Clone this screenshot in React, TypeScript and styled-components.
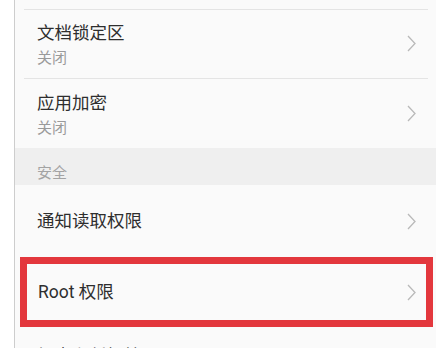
import React from "react";
import styled, { createGlobalStyle } from "styled-components";

const Global = createGlobalStyle`
  html, body { margin: 0; padding: 0; background: #ffffff; }
  body { font-family: Roboto, "Noto Sans CJK SC", sans-serif; overflow: hidden; }
`;

const Page = styled.div`
  display: flex;
  width: 436px;
  height: 348px;
  overflow: hidden;
`;

const Gutter = styled.div`
  width: 14px;
  flex: none;
  background: #ffffff;
  border-right: 1px solid #cdcdcd;
`;

const Content = styled.div`
  flex: 1;
  display: flex;
  flex-direction: column;
  background: #fafafa;
`;

const Stub = styled.div`
  height: 9px;
  flex: none;
`;

const Divider = styled.div`
  height: 1px;
  flex: none;
  margin: 0 8px 0 9px;
  background: #e4e4e4;
`;

const Row = styled.div<{ $h: number; $padTop?: number; $inset?: boolean }>`
  display: flex;
  justify-content: space-between;
  flex: none;
  box-sizing: border-box;
  height: ${(p) => p.$h}px;
  padding: ${(p) => (p.$padTop != null ? `${p.$padTop}px` : "0")}
    ${(p) => (p.$inset ? "10px" : "20px")} 0
    ${(p) => (p.$inset ? "11px" : "22px")};
  align-items: ${(p) => (p.$padTop != null ? "flex-start" : "center")};
`;

const Texts = styled.div<{ $gap?: number }>`
  display: flex;
  flex-direction: column;
  gap: ${(p) => p.$gap ?? 5}px;
`;

const Title = styled.div`
  font-family: Roboto, "Noto Sans CJK SC", sans-serif;
  font-size: 17.5px;
  line-height: 22px;
  color: #2e2e2e;
  white-space: nowrap;
`;

const Sub = styled.div`
  font-family: "Noto Sans CJK SC", sans-serif;
  font-size: 15px;
  line-height: 18px;
  color: #9a9a9a;
`;

const Section = styled.div`
  height: 37px;
  flex: none;
  box-sizing: border-box;
  background: #efefef;
  padding: 15px 0 0 22px;
  font-family: "Noto Sans CJK SC", sans-serif;
  font-size: 15px;
  line-height: 18px;
  color: #a3a3a3;
`;

const Highlight = styled.div`
  flex: none;
  margin: 0 3px 0 5px;
  border: 7px solid #e3373d;
`;

const ChevronBox = styled.div<{ $top?: number }>`
  display: flex;
  flex: none;
  margin-top: ${(p) => p.$top ?? 0}px;
`;

const Chevron = ({ top }: { top?: number }) => (
  <ChevronBox $top={top}>
    <svg width="9" height="17" viewBox="0 0 9 17">
      <path d="M1 1 L8 8.5 L1 16" fill="none" stroke="#b9b9b9" strokeWidth="1.3" />
    </svg>
  </ChevronBox>
);

export default function App() {
  return (
    <>
      <Global />
      <Page>
        <Gutter />
        <Content>
          <Stub />
          <Divider />
          <Row $h={68} $padTop={12}>
            <Texts $gap={4}>
              <Title>文档锁定区</Title>
              <Sub>关闭</Sub>
            </Texts>
            <Chevron top={13} />
          </Row>
          <Divider />
          <Row $h={69} $padTop={13}>
            <Texts $gap={4}>
              <Title>应用加密</Title>
              <Sub>关闭</Sub>
            </Texts>
            <Chevron top={13} />
          </Row>
          <Section>安全</Section>
          <Row $h={72}>
            <Title>通知读取权限</Title>
            <Chevron />
          </Row>
          <Highlight>
            <Row $h={56} $inset>
              <Title>Root 权限</Title>
              <Chevron />
            </Row>
          </Highlight>
          <Row $h={60} $padTop={18}>
            <Title>加密和凭据管理</Title>
          </Row>
        </Content>
      </Page>
    </>
  );
}
